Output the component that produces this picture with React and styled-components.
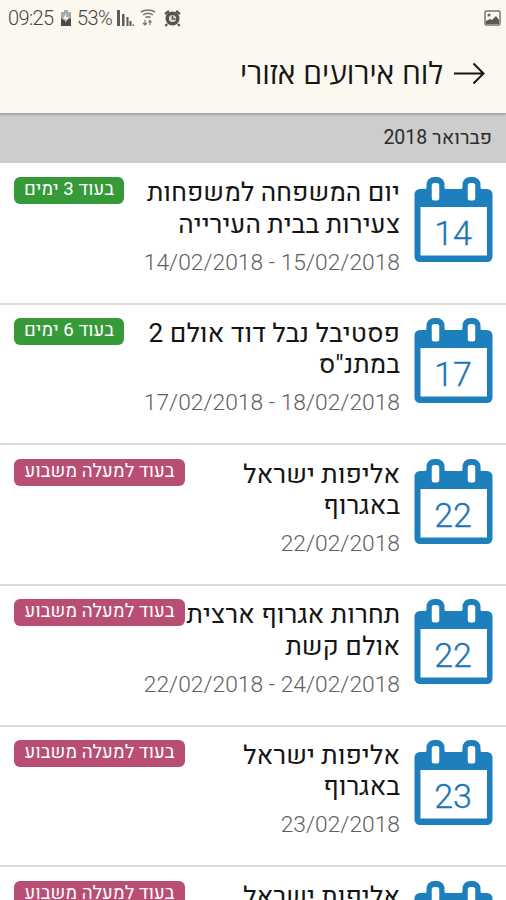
import React from 'react';
import styled, { createGlobalStyle } from 'styled-components';

const GlobalStyle = createGlobalStyle`
  * { box-sizing: border-box; }
  html, body { margin: 0; height: 100%; overflow: hidden; background: #fff; }
`;

const Screen = styled.div`
  height: 900px;
  overflow: hidden;
  display: flex;
  flex-direction: column;
  background: #fff;
  color: #151515;
  font-family: Heebo, 'Open Sans', 'Noto Sans', sans-serif;
`;

const TopArea = styled.header`
  flex: none;
  height: 114px;
  background: #fbf8f0;
  border-bottom: 1px solid #a9aaa3;
  box-shadow: 0 1px 2px rgba(0, 0, 0, 0.2);
  z-index: 1;
`;

const StatusBar = styled.div`
  height: 36px;
  padding: 0 5px 0 8px;
  display: flex;
  align-items: center;
  color: #484642;
  font: 300 20px/38px Roboto, sans-serif;
  letter-spacing: -0.6px;
`;

const StatusText = styled.span`
  width: ${(p) => p.$width}px;
  margin-right: ${(p) => p.$gap}px;
  white-space: nowrap;
`;

const StatusIcon = styled.svg`
  flex: none;
  margin-right: ${(p) => p.$gap || 0}px;
  margin-left: ${(p) => (p.$end ? 'auto' : 0)};
`;

const TitleBar = styled.div`
  direction: rtl;
  height: 74px;
  padding-right: 21px;
  display: flex;
  align-items: center;
  gap: 11px;
`;

const Title = styled.h1`
  margin: 0;
  font: 400 30px/40px 'Open Sans', sans-serif;
  white-space: nowrap;
`;

const MonthBar = styled.div`
  flex: none;
  direction: rtl;
  height: 49px;
  padding: 0 14px;
  background: #cdcdcd;
  font-size: 19.5px;
  line-height: 49px;
  color: #2c2c2c;
`;

const EventList = styled.main`
  padding-top: 1px;
`;

const EventRow = styled.article`
  direction: rtl;
  height: 140.65px;
  padding: 13.3px 13px 0 14px;
  display: flex;
  align-items: flex-start;
  border-bottom: 2px solid #dbdbdb;
`;

const DateIcon = styled.svg`
  flex: none;
  margin-left: 14px;
  color: #1d7fbb;
`;

const DayNumber = styled.text`
  font: 300 34px Roboto, sans-serif;
  fill: #1d75b6;
  stroke: #1d75b6;
  stroke-width: 0.3px;
`;

const Details = styled.div`
  flex: 1;
  min-width: 0;
  padding-top: 1px;
  white-space: nowrap;
`;

const EventName = styled.div`
  font-size: 26.2px;
  line-height: 31.5px;
`;

const EventDates = styled.div`
  direction: ltr;
  display: flex;
  justify-content: flex-end;
  margin-top: 6.5px;
  font: 300 22.8px/30px Roboto, sans-serif;
  color: #606060;
`;

const Badge = styled.span`
  flex: none;
  height: 27px;
  width: ${(p) => (p.$soon ? 110 : 171)}px;
  border-radius: 6px;
  background: ${(p) => (p.$soon ? '#369a38' : '#b94e74')};
  color: #fff;
  text-align: center;
  font-size: 18.6px;
  font-weight: 450;
  line-height: 26px;
  white-space: nowrap;
`;

const CalendarDay = ({ day }) => (
  <DateIcon width="79" height="86" viewBox="0 0 79 86">
    <rect x="0.500" y="12" width="78" height="73" rx="5.500" fill="currentColor" />
    <rect x="6.500" y="30" width="66.500" height="48.500" fill="#fff" />
    {[21.5, 57.5].map((x) => (
      <g key={x}>
        <path d={`M${x - 12} 12.500q3 0 3-3v3zM${x + 12} 12.500q-3 0-3-3v3z`} fill="currentColor" />
        <rect x={x - 9} y="0" width="18" height="28" rx="7.500" fill="currentColor" />
        <rect x={x - 3.75} y="6" width="7.500" height="17.500" rx="2.500" fill="#fff" />
      </g>
    ))}
    <DayNumber x="39" y="67.500" textAnchor="middle">{day}</DayNumber>
  </DateIcon>
);

const FAR = 'בעוד למעלה משבוע';
const events = [
  { day: 14, lines: ['יום המשפחה למשפחות', 'צעירות בבית העירייה'], dates: '14/02/2018 - 15/02/2018', badge: 'בעוד 3 ימים', soon: true },
  { day: 17, lines: ['פסטיבל נבל דוד אולם 2', 'במתנ"ס'], dates: '17/02/2018 - 18/02/2018', badge: 'בעוד 6 ימים', soon: true },
  { day: 22, lines: ['אליפות ישראל', 'באגרוף'], dates: '22/02/2018', badge: FAR },
  { day: 22, lines: ['תחרות אגרוף ארצית', 'אולם קשת'], dates: '22/02/2018 - 24/02/2018', badge: FAR },
  { day: 23, lines: ['אליפות ישראל', 'באגרוף'], dates: '23/02/2018', badge: FAR },
  { lines: ['אליפות ישראל'], badge: FAR },
];

export default function App() {
  return (
    <Screen>
      <GlobalStyle />
      <TopArea>
        <StatusBar>
          <StatusText $width={46} $gap={6}>09:25</StatusText>
          <StatusIcon $gap={5} width="12" height="18" viewBox="0 0 12 18">
            <path d="M4 1h4v2h3v14H1V3h3z" fill="#aaa8a2" />
            <path d="M1 9l4 3 6-3v8H1z" fill="#4c4a47" />
            <path d="M6.500 4L3 10h3l-1 4 4-6H6z" fill="#f5f2ea" />
          </StatusIcon>
          <StatusText $width={34} $gap={6}>53%</StatusText>
          <StatusIcon $gap={5} width="18" height="18" viewBox="0 0 18 18" fill="#5d5b57">
            <path d="M0 1h3v16H0zM5 5h2.500v12H5zM9.500 8h2v9h-2zM12.500 12h2v5h-2zM15.500 15.500h1.500V17h-1.500z" />
          </StatusIcon>
          <StatusIcon $gap={8} width="16" height="18" viewBox="0 0 16 18" fill="none" stroke="#77756f" strokeWidth="1.500">
            <path d="M1 3q7-4 14 0M3 6q5-3.500 10 0M5.500 8.500q2.500-1.500 5 0" />
            <path d="M5 11v5M3 14l2 2 2-2M10 16v-4M8.500 13.500l1.500-2 1.500 2" strokeWidth="1.200" />
          </StatusIcon>
          <StatusIcon width="17" height="17" viewBox="0 0 17 17" fill="#575551">
            <circle cx="8.500" cy="8.500" r="7" />
            <path d="M1 4l4-3M12 1l4 3M3 14l-1.500 2M14 14l1.500 2" stroke="#575551" strokeWidth="2.200" />
            <circle cx="8.500" cy="8.500" r="3.600" fill="#e0ddd6" />
            <path d="M8.500 5.500v3.500h3" fill="none" stroke="#575551" strokeWidth="1.500" />
          </StatusIcon>
          <StatusIcon $end width="17" height="16" viewBox="0 0 17 16">
            <rect x="1" y="1" width="15" height="14" rx="1.500" fill="none" stroke="#777570" strokeWidth="1.500" />
            <circle cx="5" cy="5" r="1.500" fill="#66645f" />
            <path d="M2 14v-3l4-2 2 1 4-4 3 4v4z" fill="#5c5a56" />
          </StatusIcon>
        </StatusBar>
        <TitleBar>
          <svg width="31" height="23" viewBox="0 0 31 23" fill="none" stroke="#151515" strokeWidth="2">
            <path d="M0 11.500h29.500M19.500 1.500l10 10-10 10" />
          </svg>
          <Title>לוח אירועים אזורי</Title>
        </TitleBar>
      </TopArea>
      <MonthBar>פברואר 2018</MonthBar>
      <EventList>
        {events.map((event, index) => (
          <EventRow key={index}>
            <CalendarDay day={event.day} />
            <Details>
              {event.lines.map((line) => (
                <EventName key={line}>{line}</EventName>
              ))}
              {event.dates && <EventDates>{event.dates}</EventDates>}
            </Details>
            <Badge $soon={event.soon}>{event.badge}</Badge>
          </EventRow>
        ))}
      </EventList>
    </Screen>
  );
}
